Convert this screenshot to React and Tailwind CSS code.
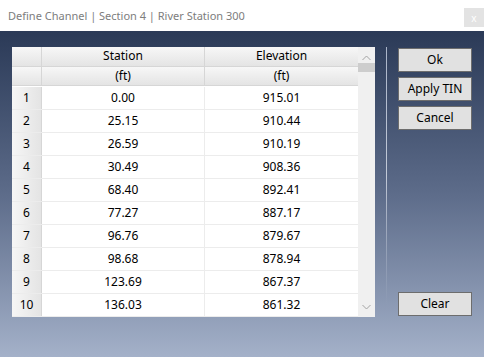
import React from 'react';

const rows = [
  ['0.00', '915.01'],
  ['25.15', '910.44'],
  ['26.59', '910.19'],
  ['30.49', '908.36'],
  ['68.40', '892.41'],
  ['77.27', '887.17'],
  ['96.76', '879.67'],
  ['98.68', '878.94'],
  ['123.69', '867.37'],
  ['136.03', '861.32'],
];

function Btn({ children, className = '' }) {
  return (
    <button className={`h-6 w-[74px] border border-[#6d6d6d] bg-[#e1e1e1] text-[12px] text-black leading-none ${className}`}>
      {children}
    </button>
  );
}

function App() {
  return (
    <div className="w-[484px] h-[357px] flex flex-col overflow-hidden" style={{ fontFamily: '"Noto Sans", "Open Sans", sans-serif' }}>
      <div className="h-[31px] bg-white flex items-start justify-between pl-2">
        <span className="mt-[8px] text-[11px] text-[#7d7d7d]">Define Channel | Section 4 | River Station 300</span>
        <div className="mt-2 w-5 h-[19px] bg-[#e3e3e3] flex items-center justify-center text-[10px] text-white leading-none">x</div>
      </div>

      <div className="flex-1 flex pt-4 pl-3 bg-gradient-to-b from-[#2b3a57] via-[#5d6c8a] to-[#a4b1c9]">
        <div className="w-[363px] h-[270px] bg-white flex overflow-hidden text-[12px] text-black">
          <div className="w-[346px] flex flex-col">
            <div className="flex h-[21px] border-b border-[#d6d6d6] bg-gradient-to-b from-[#f7f7f7] to-[#e4e4e4]">
              <div className="w-[30px] border-r border-[#d6d6d6]" />
              <div className="w-[163px] border-r border-[#d6d6d6] flex items-center justify-center">Station</div>
              <div className="w-[153px] flex items-center justify-center">Elevation</div>
            </div>
            <div className="flex h-[21px] border-b border-[#d6d6d6] bg-gradient-to-b from-[#f7f7f7] to-[#e4e4e4]">
              <div className="w-[30px] border-r border-[#d6d6d6]" />
              <div className="w-[163px] border-r border-[#d6d6d6] flex items-center justify-center">(ft)</div>
              <div className="w-[153px] flex items-center justify-center">(ft)</div>
            </div>
            <div className="h-px" />
            {rows.map((r, i) => (
              <div key={i} className="flex h-[23px] shrink-0 border-b border-[#ececec]">
                <div className="w-[30px] border-r border-[#d6d6d6] bg-gradient-to-r from-[#f6f6f6] to-[#e4e4e4] flex items-center justify-center">{i + 1}</div>
                <div className="w-[163px] border-r border-[#ececec] flex items-center justify-center">{r[0]}</div>
                <div className="w-[153px] flex items-center justify-center">{r[1]}</div>
              </div>
            ))}
          </div>
          <div className="w-[17px] bg-[#f0f0f0] flex flex-col items-center">
            <svg width="9" height="6" viewBox="0 0 9 6" className="mt-[8px]">
              <path d="M0.5 5 L4.5 1 L8.5 5" fill="none" stroke="#a3a3a3" strokeWidth="1" />
            </svg>
            <div className="mt-[2px] w-[17px] h-[9px] bg-[#cdcdcd]" />
            <div className="flex-1" />
            <svg width="9" height="6" viewBox="0 0 9 6" className="mb-[7px]">
              <path d="M0.5 1 L4.5 5 L8.5 1" fill="none" stroke="#a3a3a3" strokeWidth="1" />
            </svg>
          </div>
        </div>

        <div className="ml-[11px] w-px h-[258px] bg-gradient-to-b from-[#aab4c8] via-[#c3cad8] to-transparent" />

        <div className="ml-[11px] h-[270px] py-px flex flex-col gap-[5px]">
          <Btn>Ok</Btn>
          <Btn>Apply TIN</Btn>
          <Btn>Cancel</Btn>
          <Btn className="mt-auto">Clear</Btn>
        </div>
      </div>
    </div>
  );
}

export default App;
